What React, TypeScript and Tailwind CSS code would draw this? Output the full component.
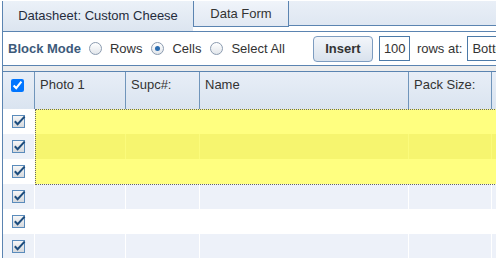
import React from 'react';

const COLS = [32, 91, 74, 209, 83, 60];
const HEADERS = ['', 'Photo 1', 'Supc#:', 'Name', 'Pack Size:', ''];
const ROWS = [0, 1, 2, 3, 4, 5];
const SELECTED = [0, 1, 2];

function Radio({ on }: { on?: boolean }) {
  return (
    <span className="w-[13px] h-[13px] shrink-0 rounded-full border border-[#8b9bb0] bg-linear-to-b from-white to-[#e2e6eb] flex items-center justify-center">
      {on && <span className="w-[5px] h-[5px] rounded-full bg-[#2c6db0]" />}
    </span>
  );
}

function RowCheck() {
  return (
    <svg width="15" height="15" viewBox="0 0 15 15">
      <defs>
        <linearGradient id="cbg" x1="0" y1="0" x2="0" y2="1">
          <stop offset="0" stopColor="#f8f8f8" />
          <stop offset="1" stopColor="#d4d7db" />
        </linearGradient>
      </defs>
      <rect x="0.5" y="1.5" width="12" height="12" fill="url(#cbg)" stroke="#5a8bbb" />
      <path d="M2.8 7.2 L5.6 10.2 L12.6 2.6" fill="none" stroke="#1d4c7c" strokeWidth="2" />
    </svg>
  );
}

export default function App() {
  return (
    <div className="w-[496px] h-[258px] overflow-hidden bg-white text-[13px] text-[#333] font-['Liberation_Sans',Arial,sans-serif]">
      {/* tabs */}
      <div className="flex h-[31px] pl-[2px] pt-[1px]">
        <div className="w-[191px] h-[30px] shrink-0 border-l border-[#5b84b1] bg-linear-to-b from-[#ebf1f8] to-[#dce5f0] flex items-center justify-center text-[#252c3c]">
          Datasheet: Custom Cheese
        </div>
        <div className="w-[96px] h-[26px] shrink-0 border-l border-r border-b border-[#5b84b1] bg-linear-to-b from-[#f0f4fa] to-[#e2e9f3] flex items-center justify-center">
          Data Form
        </div>
        <div className="flex-1 h-[25px] border-b border-[#5b84b1] bg-linear-to-b from-[#e9eff7] to-[#dfe7f2]" />
      </div>

      <div className="ml-[2px] border-l border-t border-[#5b84b1]">
        {/* toolbar */}
        <div className="h-[34px] flex items-center pl-[5px] border-b border-[#5b84b1] whitespace-nowrap overflow-hidden">
          <span className="font-bold text-[#3d5a7a]">Block Mode</span>
          <span className="ml-[8px]"><Radio /></span>
          <span className="ml-[8px]">Rows</span>
          <span className="ml-[9px]"><Radio on /></span>
          <span className="ml-[8px]">Cells</span>
          <span className="ml-[9px]"><Radio /></span>
          <span className="ml-[8px]">Select All</span>
          <button className="ml-[28px] w-[60px] h-[26px] shrink-0 rounded-[4px] border border-[#7d9cc0] bg-linear-to-b from-[#f3f6fa] to-[#d9e2ed] font-bold text-[#333]">
            Insert
          </button>
          <span className="ml-[6px] w-[31px] h-[25px] shrink-0 border border-[#4c7aa8] flex items-center pl-[4px]">100</span>
          <span className="ml-[7px]">rows at:</span>
          <span className="ml-[5px] w-[60px] h-[25px] shrink-0 border border-[#4c7aa8] flex items-center pl-[4px]">Bottom</span>
        </div>

        <div className="h-[6px] bg-[#ececec] border-b border-[#5b84b1]" />

        {/* header */}
        <div className="flex h-[37px] bg-linear-to-b from-[#e8eef7] to-[#dae4f0] whitespace-nowrap">
          {HEADERS.map((h, i) => (
            <div
              key={i}
              className="shrink-0 h-full border-r border-[#7095bb] pl-[5px] pt-[3px]"
              style={{ width: COLS[i] }}
            >
              {i === 0 ? (
                <div className="pl-[3px] pt-[4px] flex">
                  <input type="checkbox" checked readOnly className="m-0 w-[13px] h-[13px] accent-[#0075ff]" />
                </div>
              ) : (
                h
              )}
            </div>
          ))}
        </div>

        {/* body */}
        <div className="relative">
          {ROWS.map((r) => {
            const odd = r % 2 === 1;
            const sel = SELECTED.includes(r);
            const cellBg = sel ? (odd ? 'bg-[#f6f56f]' : 'bg-[#ffff80]') : odd ? 'bg-[#edf1f9]' : 'bg-white';
            const sep = sel ? (odd ? 'border-[#fbfb7b]' : 'border-[#ffff80]') : 'border-white';
            return (
              <div key={r} className="flex h-[25px]">
                <div
                  className={`shrink-0 h-full border-r border-white flex items-center pl-[9px] ${odd ? 'bg-[#edf1f8]' : 'bg-white'}`}
                  style={{ width: COLS[0] }}
                >
                  <RowCheck />
                </div>
                {COLS.slice(1).map((w, i) => (
                  <div key={i} className={`shrink-0 h-full border-r ${sep} ${cellBg}`} style={{ width: w }} />
                ))}
              </div>
            );
          })}
          <div className="absolute left-[32px] top-0 w-[480px] h-[76px] border border-dotted border-[#666]" />
        </div>
      </div>
    </div>
  );
}
